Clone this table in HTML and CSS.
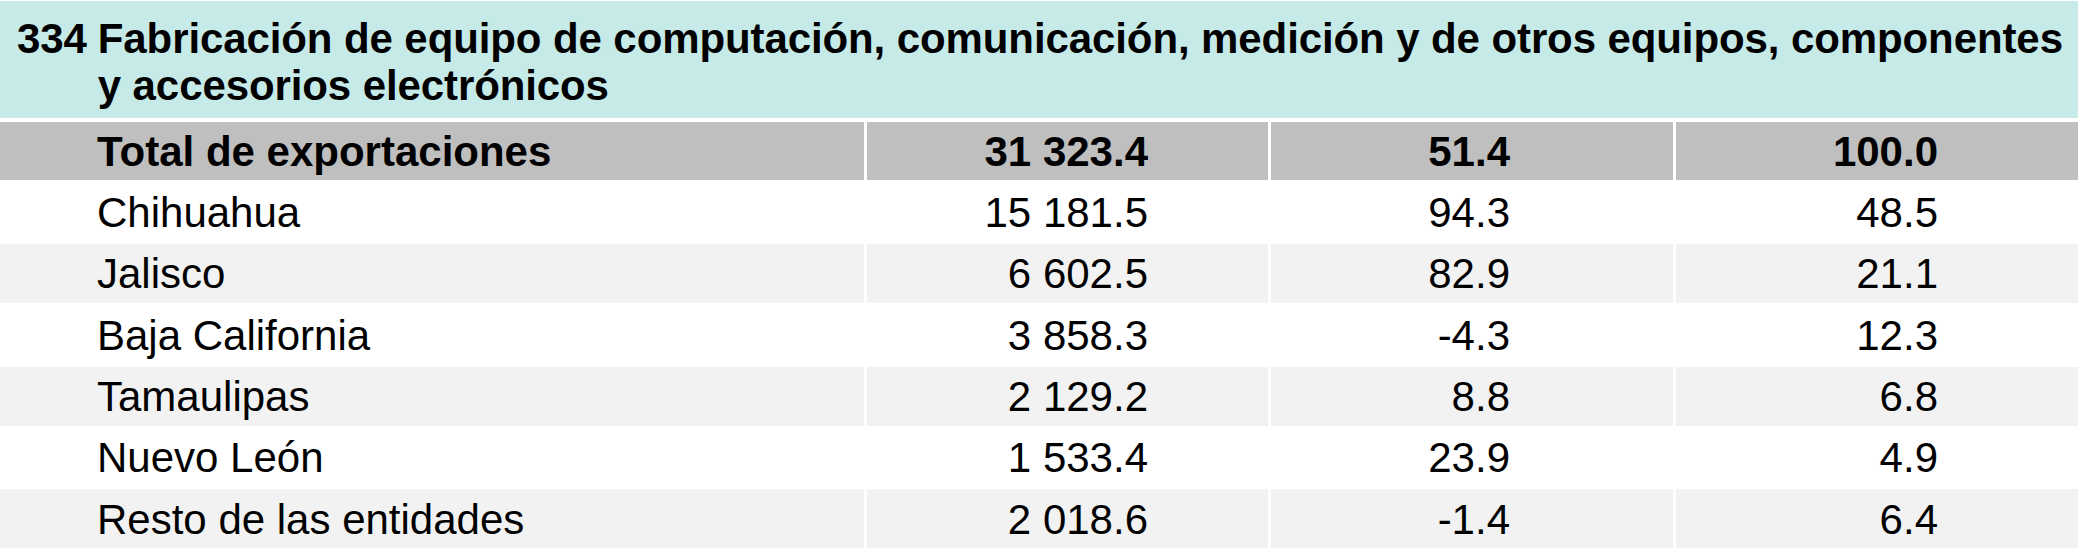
FILE: index.html
```html
<!DOCTYPE html>
<html lang="es">
<head>
<meta charset="utf-8">
<title>334 Exportaciones</title>
<link rel="stylesheet" href="styles.css">
</head>
<body>
<div class="sheet">
  <div class="title">
    <span class="code">334</span>
    <span class="name">Fabricación de equipo de computación, comunicación, medición y de otros equipos, componentes<br>y accesorios electrónicos</span>
  </div>
  <div class="grid">
    <div class="cell label total">Total de exportaciones</div>
    <div class="cell num c2 total">31 323.4</div>
    <div class="cell num c3 total">51.4</div>
    <div class="cell num c4 total">100.0</div>

    <div class="cell label">Chihuahua</div>
    <div class="cell num c2">15 181.5</div>
    <div class="cell num c3">94.3</div>
    <div class="cell num c4">48.5</div>

    <div class="cell label alt">Jalisco</div>
    <div class="cell num c2 alt">6 602.5</div>
    <div class="cell num c3 alt">82.9</div>
    <div class="cell num c4 alt">21.1</div>

    <div class="cell label">Baja California</div>
    <div class="cell num c2">3 858.3</div>
    <div class="cell num c3">-4.3</div>
    <div class="cell num c4">12.3</div>

    <div class="cell label alt">Tamaulipas</div>
    <div class="cell num c2 alt">2 129.2</div>
    <div class="cell num c3 alt">8.8</div>
    <div class="cell num c4 alt">6.8</div>

    <div class="cell label">Nuevo León</div>
    <div class="cell num c2">1 533.4</div>
    <div class="cell num c3">23.9</div>
    <div class="cell num c4">4.9</div>

    <div class="cell label alt">Resto de las entidades</div>
    <div class="cell num c2 alt">2 018.6</div>
    <div class="cell num c3 alt">-1.4</div>
    <div class="cell num c4 alt">6.4</div>
  </div>
</div>
</body>
</html>
```
FILE: styles.css
```css
html, body {
  margin: 0;
  padding: 0;
  background: #ffffff;
}

body {
  font-family: "Liberation Sans", Arial, sans-serif;
  color: #000000;
}

.sheet {
  width: 2078px;
  padding-top: 1px;
}

.title {
  display: flex;
  gap: 11px;
  background: #c6eae8;
  height: 117px;
  box-sizing: border-box;
  padding: 14px 0 0 17px;
  font-weight: bold;
  font-size: 42px;
  line-height: 47px;
  letter-spacing: -0.1px;
}

.code {
  flex: none;
}

.name {
  white-space: nowrap;
}

.grid {
  display: grid;
  grid-template-columns: 864px 401px 402px 402px;
  grid-template-rows: 58px repeat(6, 59px);
  column-gap: 3px;
  row-gap: 2.4px;
  margin-top: 4px;
}

.cell {
  display: flex;
  align-items: center;
  font-size: 42px;
  line-height: 1;
  background: #ffffff;
  white-space: nowrap;
  padding-top: 2px;
  box-sizing: border-box;
}

.label {
  padding-left: 97px;
}

.num {
  justify-content: flex-end;
}

.c2 { padding-right: 120px; }
.c3 { padding-right: 163px; }
.c4 { padding-right: 140px; }

.total {
  background: #bfbfbf;
  font-weight: bold;
}

.alt {
  background: #f2f2f2;
}
```
